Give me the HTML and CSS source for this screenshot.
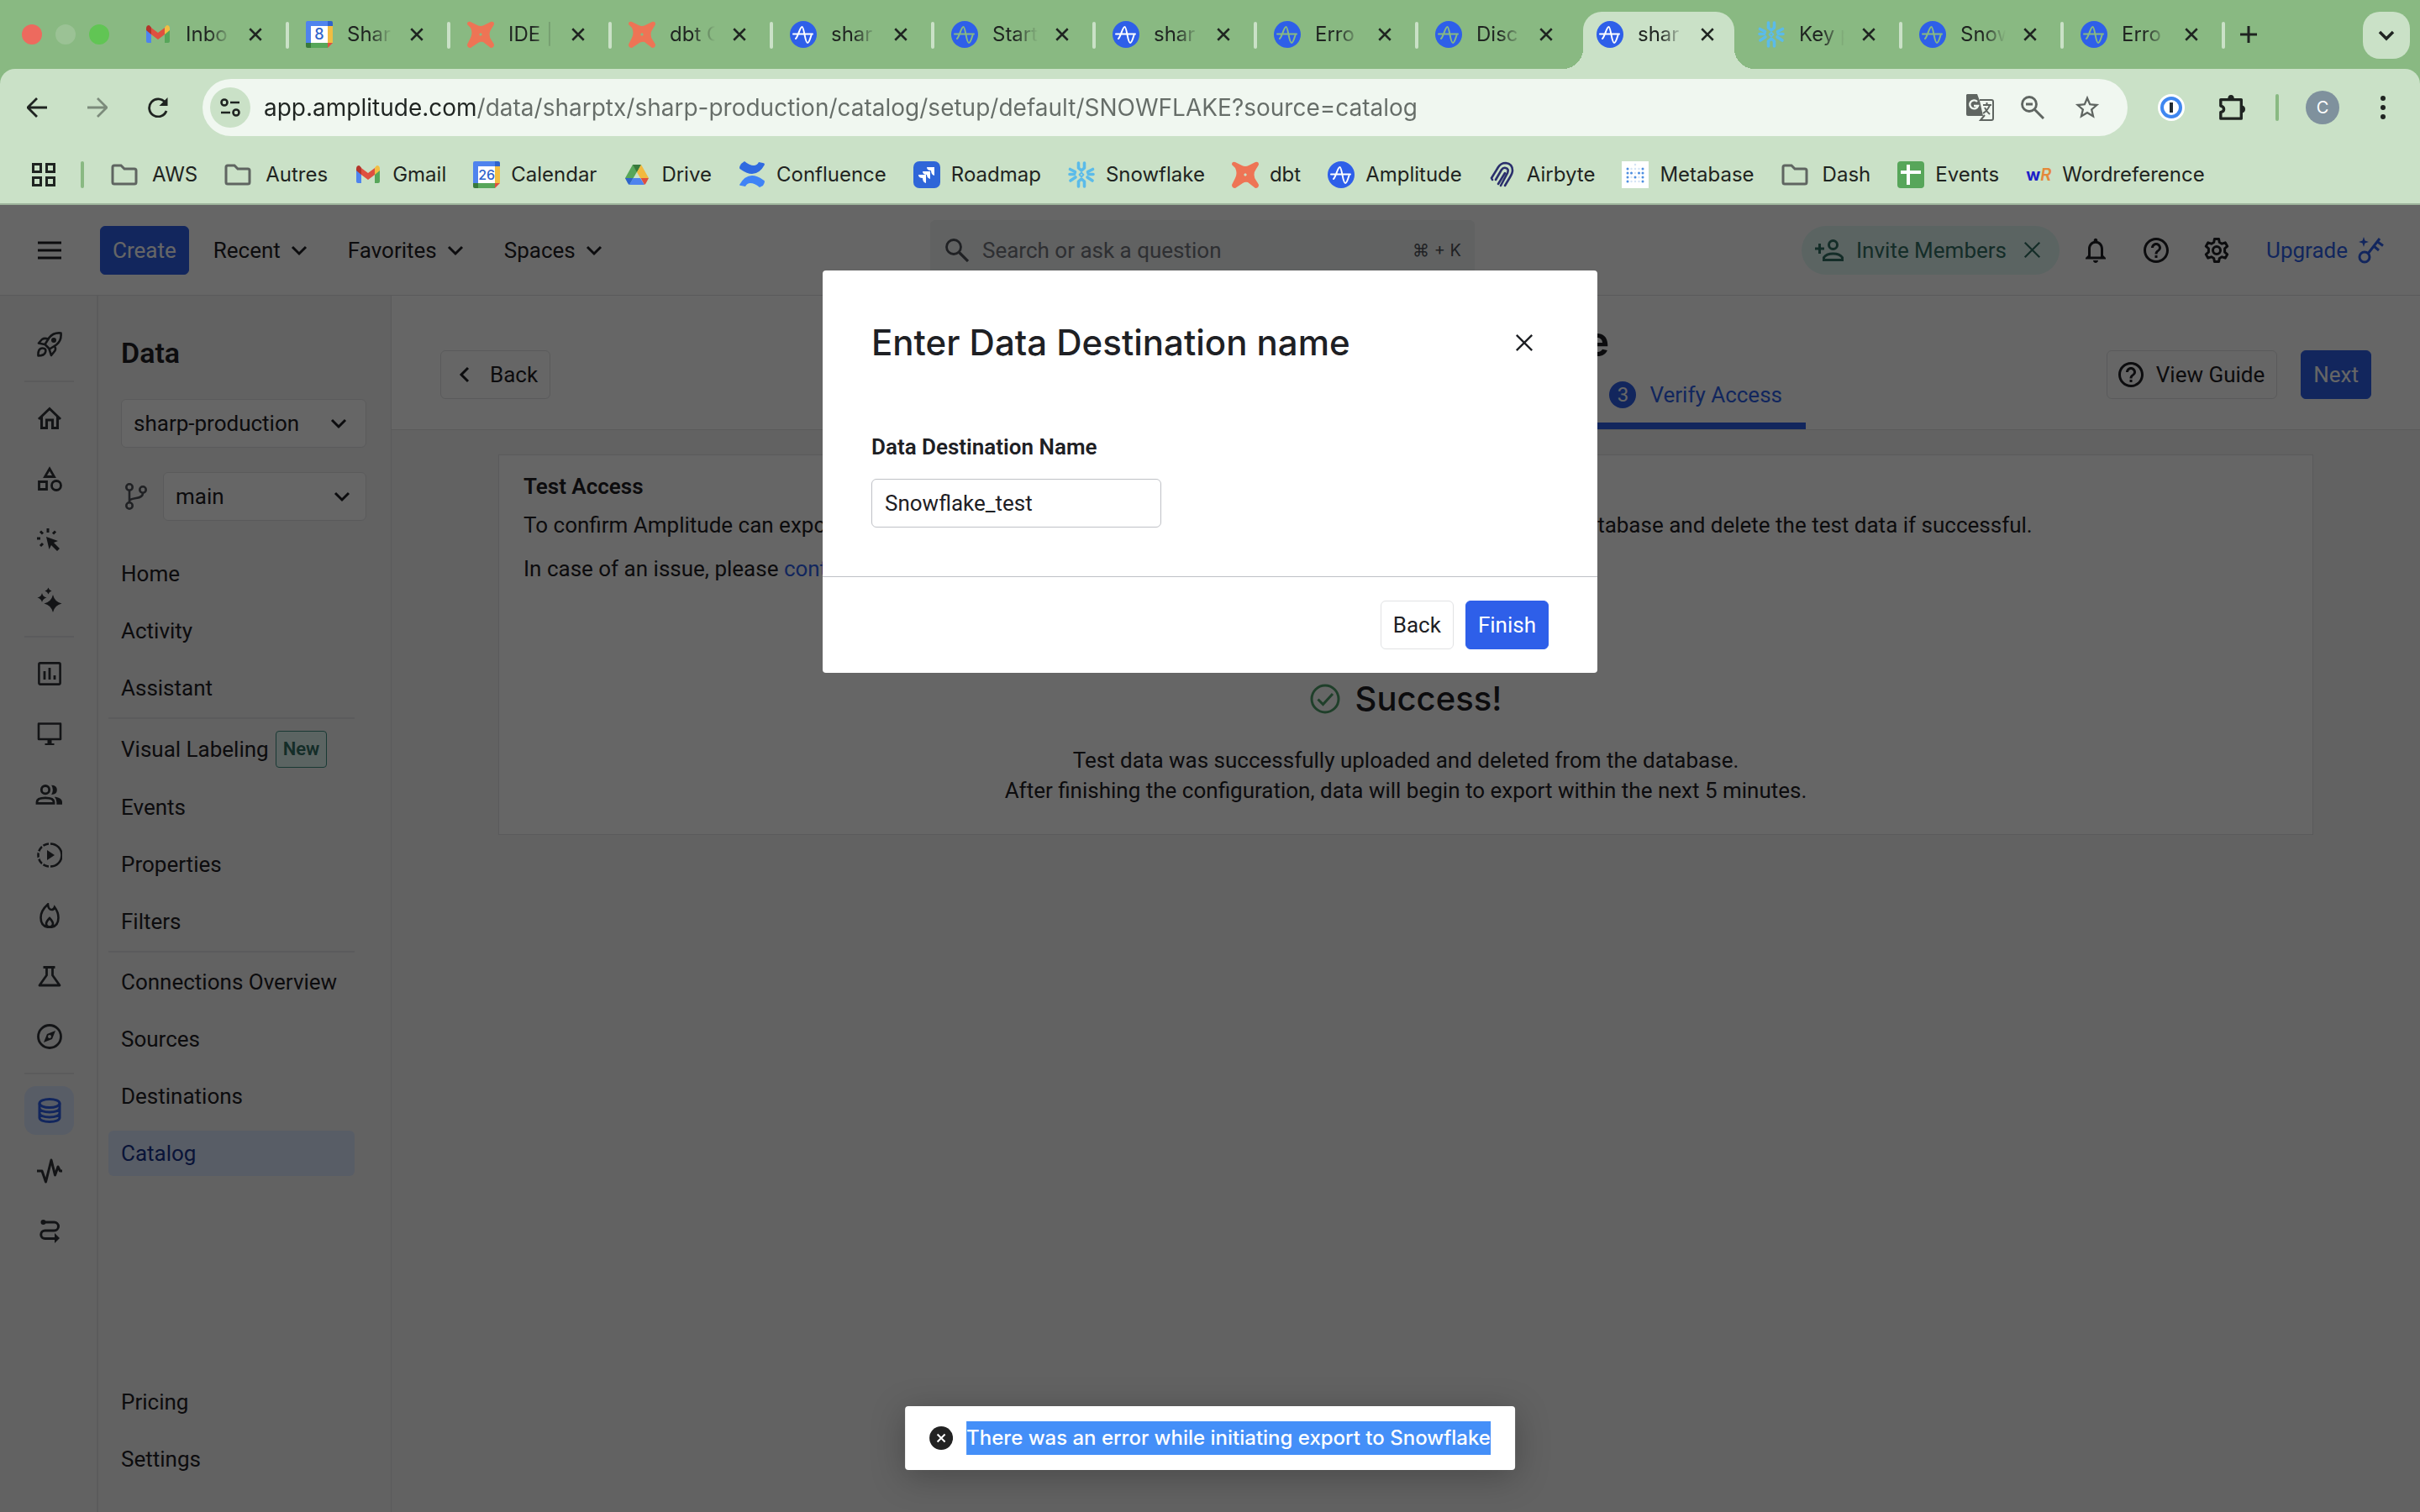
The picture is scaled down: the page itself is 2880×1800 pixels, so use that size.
FILE: index.html
```html
<!DOCTYPE html>
<html lang="en">

<head>
    <meta charset="UTF-8">
    <meta name="viewport" content="width=device-width, initial-scale=1.0">
    <title>Amplitude - Catalog</title>
    <link rel="stylesheet" href="styles.css">
</head>

<body>
    <!-- Shared icons -->
    <svg class="sprite" aria-hidden="true">
        <symbol id="close" viewBox="0 0 24 24"><path d="M3 3l18 18M21 3L3 21" fill="none" stroke="currentColor" stroke-width="3.400"/></symbol>
        <symbol id="close-thin" viewBox="0 0 24 24"><path d="M2 2l20 20M22 2L2 22" fill="none" stroke="currentColor" stroke-width="2.600"/></symbol>
        <symbol id="chevron" viewBox="0 0 20 20"><path d="M2 6l8 8 8-8" fill="none" stroke="currentColor" stroke-width="3"/></symbol>
        <symbol id="folder" viewBox="0 0 32 32"><path d="M2 25V7q0-2 2-2h8l4 4h12q2 0 2 2v14q0 2-2 2H4q-2 0-2-2z" fill="none" stroke="#5f6561" stroke-width="3"/></symbol>
        <symbol id="gmail" viewBox="0 0 32 32">
            <path d="M2 9v15q0 2 2 2h4V13z" fill="#4e84ee"/>
            <path d="M30 9v15q0 2-2 2h-4V13z" fill="#57a65a"/>
            <path d="M8 8l8 6 8-6v8l-8 6-8-6z" fill="#df4f40"/>
            <path d="M2 9q0-4 3.500-4L8 7.500V16l-6-5z" fill="#b3352b"/>
            <path d="M30 9q0-4-3.500-4L24 7.500V16l6-5z" fill="#f2bd42"/>
        </symbol>
        <symbol id="calendar" viewBox="0 0 32 32">
            <path d="M0 2q0-2 2-2h24v6H6v20H0z" fill="#4f83ee"/>
            <path d="M26 0h4q2 0 2 2v4h-6z" fill="#2f63cb"/>
            <path d="M26 6h6v20h-6z" fill="#f2bd42"/>
            <path d="M6 26h20v6H6z" fill="#57a65a"/>
            <path d="M0 26h6v6H2q-2 0-2-2z" fill="#38793c"/>
            <path d="M26 26h6l-6 6z" fill="#df4f40"/>
            <path d="M6 6h20v20H6z" fill="#fff"/>
        </symbol>
        <symbol id="drive" viewBox="0 0 32 32">
            <path d="M11 4h10L7 28 2 20z" fill="#57a65a"/>
            <path d="M11 4h10l-5 9z" fill="#38793c"/>
            <path d="M21 4l9 16H20l-4-7z" fill="#f2b93f"/>
            <path d="M2 20h9.500L7 28q-1-.4-2-2z" fill="#2f63cb"/>
            <path d="M11.500 20H20l5 8H7z" fill="#4f83ee"/>
            <path d="M20.500 20H30l-3.500 6.500L25 28z" fill="#df4f40"/>
        </symbol>
        <symbol id="dbt" viewBox="0 0 32 32"><path fill-rule="evenodd" d="M0 4Q0 0 4 1l8 4q4 2 8 0l8-4q4-1 4 3-1 2-3 5-5 7 0 14 2 3 3 5 0 4-4 4l-9-7q-3-1-6 1l-9 6q-4 0-4-4l4-8q3-6 0-12zM16 14l-2 2 2 2 2-2z" fill="#ee7455"/></symbol>
        <symbol id="amplitude" viewBox="0 0 32 32">
            <circle cx="16" cy="16" r="16" fill="#2e5fe9"/>
            <path d="M4 15.500h23M7 21c3-3 5-14 7.500-14s3.500 19 6.500 19c2 0 3-5 4.500-9" fill="none" stroke="var(--line, #fff)" stroke-width="2" stroke-linecap="round"/>
        </symbol>
        <symbol id="snowflake" viewBox="0 0 32 32">
            <g fill="none" stroke="#5bbbe9" stroke-width="3.600" stroke-linecap="round" stroke-linejoin="round">
                <path d="M12.500 2v6l3.500 3 3.500-3V2M12.500 30v-6l3.500-3 3.500 3v6"/>
                <path d="M2.500 9.500l6 3-1 3H2M3 23l6-4M29.500 9.500l-6 3 1 3H30M29 23l-6-4"/>
                <path d="M16 13.500l2.500 2.500-2.500 2.500-2.500-2.500z" stroke-width="1.800"/>
            </g>
        </symbol>
        <symbol id="confluence" viewBox="0 0 32 32">
            <path d="M3 3q-2 3-2 5 0 1 2 2 7 5 13 5 9 0 15-11 0-2-2-2l-5-1q-2 4-6 4-5 0-11-5z" fill="#2f6ae0"/>
            <path d="M29 29q2-3 2-5 0-1-2-2-7-5-13-5-9 0-15 11 0 1 2 1l5 1q2-4 6-4 5 0 11 5z" fill="#3f83f6"/>
        </symbol>
        <symbol id="roadmap" viewBox="0 0 32 32">
            <rect width="32" height="32" rx="7" fill="#2f66d8"/>
            <path d="M16 7h9v10q-4-1-4-6-5 0-5-4zM11 12h9v9q-4-1-4-5-5 0-5-4zM6 16h9v10q-4-1-4-6-5 0-5-4z" fill="#fff"/>
        </symbol>
        <symbol id="airbyte" viewBox="0 0 32 32"><path d="M3 20L11 7q3-5 9-5 8 1 8 9 0 3-3 8l-6 10M8 22l7-12q2-3 5-2 4 1 2 6L14 29M11 27l8-13M3 20l1 2" fill="none" stroke="#2a2f6c" stroke-width="2.600" stroke-linecap="round"/></symbol>
        <symbol id="metabase" viewBox="0 0 32 32">
            <path d="M0 0h32v32H0z" fill="#fff"/>
            <path d="M11.500 9v16M20.500 9v16M16 4v25" stroke="#d5e4f6" stroke-width="2.500" stroke-linecap="round" stroke-dasharray="0 5" fill="none"/>
            <path d="M7 9v16M25 9v16M11.500 14v1M20.500 14v1M16 19v1" stroke="#4f8fe0" stroke-width="3" stroke-linecap="round" stroke-dasharray="0 5" fill="none"/>
        </symbol>
        <symbol id="sheets" viewBox="0 0 32 32"><rect width="32" height="32" rx="4" fill="#57a65a"/><path d="M4 11h24v4H15v13h-4V15H4zM11 4h4v8h-4z" fill="#fff"/></symbol>
        <symbol id="help" viewBox="0 0 24 24"><path fill="currentColor" d="M11 18h2v-2h-2v2zm1-16C6.480 2 2 6.480 2 12s4.480 10 10 10 10-4.480 10-10S17.520 2 12 2zm0 18c-4.410 0-8-3.590-8-8s3.590-8 8-8 8 3.590 8 8-3.590 8-8 8zm0-14c-2.210 0-4 1.790-4 4h2c0-1.100.9-2 2-2s2 .9 2 2c0 2-3 1.750-3 5h2c0-2.250 3-2.500 3-5 0-2.210-1.790-4-4-4z"/></symbol>
    </svg>

    <!-- Browser -->
    <header class="browser">
        <div class="tab-strip">
            <div class="window-buttons">
                <span class="dot dot-red"></span>
                <span class="dot dot-pale"></span>
                <span class="dot dot-green"></span>
            </div>
            <div class="tab"><svg class="favicon"><use href="#gmail"/></svg><span>Inbo</span><button aria-label="Close tab"><svg><use href="#close"/></svg></button></div>
            <div class="tab"><div class="cal-icon"><svg class="favicon"><use href="#calendar"/></svg><b>8</b></div><span>Shar</span><button aria-label="Close tab"><svg><use href="#close"/></svg></button></div>
            <div class="tab"><svg class="favicon"><use href="#dbt"/></svg><span>IDE |</span><button aria-label="Close tab"><svg><use href="#close"/></svg></button></div>
            <div class="tab"><svg class="favicon"><use href="#dbt"/></svg><span>dbt C</span><button aria-label="Close tab"><svg><use href="#close"/></svg></button></div>
            <div class="tab"><svg class="favicon"><use href="#amplitude"/></svg><span>shar</span><button aria-label="Close tab"><svg><use href="#close"/></svg></button></div>
            <div class="tab asleep"><svg class="favicon"><use href="#amplitude"/></svg><span>Start</span><button aria-label="Close tab"><svg><use href="#close"/></svg></button></div>
            <div class="tab"><svg class="favicon"><use href="#amplitude"/></svg><span>shar</span><button aria-label="Close tab"><svg><use href="#close"/></svg></button></div>
            <div class="tab asleep"><svg class="favicon"><use href="#amplitude"/></svg><span>Erro</span><button aria-label="Close tab"><svg><use href="#close"/></svg></button></div>
            <div class="tab asleep no-line"><svg class="favicon"><use href="#amplitude"/></svg><span>Disc</span><button aria-label="Close tab"><svg><use href="#close"/></svg></button></div>
            <div class="tab tab-current"><svg class="favicon"><use href="#amplitude"/></svg><span>shar</span><button aria-label="Close tab"><svg><use href="#close"/></svg></button></div>
            <div class="tab"><svg class="favicon"><use href="#snowflake"/></svg><span>Key p</span><button aria-label="Close tab"><svg><use href="#close"/></svg></button></div>
            <div class="tab asleep"><svg class="favicon"><use href="#amplitude"/></svg><span>Snow</span><button aria-label="Close tab"><svg><use href="#close"/></svg></button></div>
            <div class="tab asleep"><svg class="favicon"><use href="#amplitude"/></svg><span>Erro</span><button aria-label="Close tab"><svg><use href="#close"/></svg></button></div>
            <button class="new-tab" aria-label="New tab"><svg viewBox="0 0 20 20"><path d="M10 0v20M0 10h20" stroke="currentColor" stroke-width="3"/></svg></button>
            <button class="tab-search" aria-label="Search tabs"><svg viewBox="0 0 20 20"><path d="M2 6l8 8 8-8" fill="none" stroke="currentColor" stroke-width="3.500"/></svg></button>
        </div>

        <div class="toolbar">
            <button aria-label="Back"><svg viewBox="0 0 24 24"><path d="M12 1L1 12l11 11M1.500 12H24" fill="none" stroke="currentColor" stroke-width="2.800"/></svg></button>
            <button aria-label="Forward" class="disabled"><svg viewBox="0 0 24 24"><path d="M12 1l11 11-11 11M22.500 12H0" fill="none" stroke="currentColor" stroke-width="2.800"/></svg></button>
            <button aria-label="Reload"><svg viewBox="0 0 24 24"><path d="M22 16A10.500 10.500 0 1 1 20.500 6" fill="none" stroke="currentColor" stroke-width="2.800"/><path d="M23.500 0v10h-10z" fill="currentColor"/></svg></button>
            <div class="omnibox">
                <button class="site-info" aria-label="Site information"><svg viewBox="0 0 24 24"><g fill="none" stroke="currentColor" stroke-width="2.600"><circle cx="5" cy="6" r="3.500"/><circle cx="19" cy="18" r="3.500"/><path d="M12 6h11M1 18h11"/></g></svg></button>
                <input type="text" class="url" aria-label="Address" value="app.amplitude.com/data/sharptx/sharp-production/catalog/setup/default/SNOWFLAKE?source=catalog">
                <button aria-label="Translate"><svg class="wide" viewBox="0 0 34 34"><path d="M2 1h12l3 8 4 18H3q-2 0-2-2V2z" fill="#5f6561"/><path d="M17 8h14q2 0 2 2v20q0 2-2 2H18l5-6" fill="none" stroke="#5f6561" stroke-width="2"/><path d="M21 14h10M25.500 11v3M29 14q-2 6-8 10M23 17q2 5 6 8" fill="none" stroke="#5f6561" stroke-width="2"/><path d="M14 10a5 5 0 1 0 1 5h-5" fill="none" stroke="#f0f7f0" stroke-width="2.400"/></svg></button>
                <button aria-label="Zoom"><svg viewBox="0 0 28 28"><circle cx="10" cy="10" r="8.500" fill="none" stroke="#5f6561" stroke-width="2.800"/><path d="M6 10h8M16.500 16.500L27 27" stroke="#5f6561" stroke-width="3"/></svg></button>
                <button aria-label="Bookmark"><svg class="wide" viewBox="0 0 24 24"><path d="M22 9.240l-7.190-.62L12 2 9.190 8.630 2 9.240l5.460 4.730L5.820 21 12 17.270 18.180 21l-1.630-7.030L22 9.240zM12 15.400l-3.760 2.270 1-4.280-3.320-2.880 4.380-.38L12 6.100l1.710 4.040 4.380.38-3.320 2.880 1 4.280L12 15.400z" fill="#5f6561"/></svg></button>
            </div>
            <div class="extensions">
                <button aria-label="1Password"><svg viewBox="0 0 32 32"><circle cx="16" cy="16" r="16" fill="#fff"/><circle cx="16" cy="16" r="11" fill="none" stroke="#3f87f0" stroke-width="4"/><path d="M14 10h4v12h-4z" fill="#222b33"/></svg></button>
                <button class="puzzle" aria-label="Extensions"><svg viewBox="0 0 34 34"><path d="M3 7h26v24H3v-8q4-1 4-4t-4-4z" fill="none" stroke="currentColor" stroke-width="3.600" stroke-linejoin="round"/><path d="M12 6q0-5 4-5t4 5zM30 14q4 1 4 5t-4 5z" fill="currentColor"/></svg></button>
                <span class="bar"></span>
                <button class="avatar" aria-label="Profile">C</button>
                <button aria-label="Menu"><svg viewBox="0 0 32 32"><g fill="currentColor"><circle cx="16" cy="5" r="3"/><circle cx="16" cy="16" r="3"/><circle cx="16" cy="27" r="3"/></g></svg></button>
            </div>
        </div>

        <nav class="bookmarks">
            <button class="apps" aria-label="Apps"><svg viewBox="0 0 28 28"><path d="M1.500 1.500h9v9h-9zM17.500 1.500h9v9h-9zM1.500 17.500h9v9h-9zM17.500 17.500h9v9h-9z" fill="none" stroke="currentColor" stroke-width="3"/></svg></button>
            <span class="bar"></span>
            <a href="#" class="folder"><svg><use href="#folder"/></svg>AWS</a>
            <a href="#" class="folder"><svg><use href="#folder"/></svg>Autres</a>
            <a href="#"><svg><use href="#gmail"/></svg>Gmail</a>
            <a href="#"><span class="cal-icon"><svg><use href="#calendar"/></svg><b>26</b></span>Calendar</a>
            <a href="#"><svg><use href="#drive"/></svg>Drive</a>
            <a href="#"><svg><use href="#confluence"/></svg>Confluence</a>
            <a href="#"><svg><use href="#roadmap"/></svg>Roadmap</a>
            <a href="#"><svg><use href="#snowflake"/></svg>Snowflake</a>
            <a href="#"><svg><use href="#dbt"/></svg>dbt</a>
            <a href="#"><svg><use href="#amplitude"/></svg>Amplitude</a>
            <a href="#"><svg><use href="#airbyte"/></svg>Airbyte</a>
            <a href="#"><svg><use href="#metabase"/></svg>Metabase</a>
            <a href="#" class="folder"><svg><use href="#folder"/></svg>Dash</a>
            <a href="#"><svg><use href="#sheets"/></svg>Events</a>
            <a href="#"><span class="wr-icon"><b>w</b><i>R</i></span>Wordreference</a>
        </nav>
    </header>

    <!-- Amplitude -->
    <div class="app">
        <header class="app-header">
            <div class="header-left">
                <button class="hamburger" aria-label="Menu"><svg viewBox="0 0 28 22"><path d="M0 2h28M0 11h28M0 20h28" stroke="currentColor" stroke-width="3"/></svg></button>
                <button class="btn btn-primary">Create</button>
                <button class="menu-btn">Recent <svg><use href="#chevron"/></svg></button>
                <button class="menu-btn">Favorites <svg><use href="#chevron"/></svg></button>
                <button class="menu-btn">Spaces <svg><use href="#chevron"/></svg></button>
            </div>
            <div class="search">
                <svg viewBox="0 0 28 28"><circle cx="10" cy="10" r="8.500" fill="none" stroke="currentColor" stroke-width="2.800"/><path d="M16.500 16.500L27 27" stroke="currentColor" stroke-width="3.200"/></svg>
                <input type="text" placeholder="Search or ask a question" aria-label="Search">
                <kbd>⌘ + K</kbd>
            </div>
            <div class="header-right">
                <div class="invite">
                    <svg class="invite-icon" viewBox="0 0 34 26"><g fill="none" stroke="currentColor" stroke-width="3"><path d="M0 11h11M5.500 5v12"/><circle cx="21.500" cy="6.500" r="5"/><path d="M10.500 24.500v-3q3-4.500 11-4.500t11 4.500v3z"/></g></svg>
                    <button class="invite-btn">Invite Members</button>
                    <button class="invite-close" aria-label="Dismiss"><svg><use href="#close-thin"/></svg></button>
                </div>
                <button class="icon-btn" aria-label="Notifications"><svg viewBox="0 0 24 24"><path fill="currentColor" d="M12 22c1.100 0 2-.9 2-2h-4c0 1.100.89 2 2 2zm6-6v-5c0-3.070-1.640-5.640-4.500-6.320V4c0-.83-.67-1.500-1.500-1.500s-1.500.67-1.500 1.500v.68C7.630 5.360 6 7.920 6 11v5l-2 2v1h16v-1l-2-2zm-2 1H8v-6c0-2.480 1.510-4.500 4-4.500s4 2.020 4 4.500v6z"/></svg></button>
                <button class="icon-btn" aria-label="Help"><svg><use href="#help"/></svg></button>
                <button class="icon-btn" aria-label="Settings"><svg viewBox="0 0 24 24"><path fill="none" stroke="currentColor" stroke-width="2" stroke-linejoin="round" d="M10.300 3h3.400l.5 2.700 2 1.100 2.600-.9 1.700 2.900-2.100 1.800v2.800l2.100 1.800-1.700 2.900-2.600-.9-2 1.100-.5 2.700h-3.400l-.5-2.700-2-1.100-2.600.9-1.700-2.900 2.100-1.800v-2.800L3.500 8.800l1.700-2.900 2.600.9 2-1.100z"/><circle cx="12" cy="12" r="3" fill="none" stroke="currentColor" stroke-width="2"/></svg></button>
                <a href="#" class="upgrade">Upgrade <svg viewBox="0 0 32 32"><g fill="none" stroke="currentColor" stroke-width="3"><circle cx="8" cy="24" r="6"/><path d="M12 20L26 2M19 11l6 5M23 5.500l7 5"/></g><path d="M7 0l1.500 4.500L13 6 8.500 7.500 7 12 5.500 7.500 1 6l4.500-1.500z" fill="currentColor"/></svg></a>
            </div>
        </header>

        <div class="app-body">
            <nav class="rail">
                <a href="#" aria-label="Get started"><svg viewBox="0 0 30 30"><g fill="none" stroke="currentColor" stroke-width="2.600" stroke-linejoin="round"><path d="M28.500 1.500q-9-1-14 5.500l-5 8 5.500 5.500 8-5q6.500-5 5.500-14zM13 8.500q-4-1.500-7 .5l-4 4.500 7 1.500M21 17q2 4 0 6l-4 5-2.500-7.500M1.500 28.500q-.5-9 5-9 5 0 3.500 5-1.500 4-8.500 4z"/></g><circle cx="20" cy="10" r="3" fill="currentColor"/></svg></a>
                <hr>
                <a href="#" aria-label="Home"><svg viewBox="0 0 30 30"><path d="M2 16L15 3.500 28 16M5.500 13v13.500h6V17h7v9.500h6V13" fill="none" stroke="currentColor" stroke-width="3"/></svg></a>
                <a href="#" aria-label="Shapes"><svg viewBox="0 0 30 30"><g fill="none" stroke="currentColor" stroke-width="2.800"><path d="M15 3l5.500 9.500h-11zM2.500 18.500h9v9h-9z"/><circle cx="23" cy="23" r="5.500"/></g></svg></a>
                <a href="#" aria-label="Autocapture"><svg viewBox="0 0 30 30"><path d="M11 12l14 5-5 2 7 7-3 3-7-7-2.500 5z" fill="currentColor"/><path d="M13 2v5M0 14h4M4 5.500l3 3M22 5.500l-3 3M4 23l3-3" stroke="currentColor" stroke-width="3"/></svg></a>
                <a href="#" aria-label="AI"><svg viewBox="0 0 30 30"><path d="M19 9q2 8.500 10.500 10.500Q21 21.500 19 30q-2-8.500-10.500-10.500Q17 17.500 19 9zM6 7q1 4.500 5.500 5.500Q7 13.500 6 18q-1-4.500-5.500-5.500Q5 11.500 6 7zM13.500.5q.8 3.200 4 4-3.200.8-4 4-.8-3.200-4-4 3.200-.8 4-4z" fill="currentColor"/></svg></a>
                <hr>
                <a href="#" aria-label="Analytics"><svg viewBox="0 0 30 30"><rect x="2.400" y="2.400" width="25.200" height="25.200" rx="1.500" fill="none" stroke="currentColor" stroke-width="2.600"/><path d="M9 12v10M15 8v14M21 17v5" stroke="currentColor" stroke-width="2.800"/></svg></a>
                <a href="#" aria-label="Sessions"><svg viewBox="0 0 30 30"><path d="M2 2.500h26v18.500H2z" fill="none" stroke="currentColor" stroke-width="2.600" stroke-linejoin="round"/><path d="M12.500 22h5v4h3v2h-11v-2h3z" fill="currentColor"/></svg></a>
                <a href="#" aria-label="Audiences"><svg class="large" viewBox="0 0 24 24"><path fill="none" stroke="currentColor" stroke-width="1.700" d="M3 18.200v-1q0-2.900 6-2.900t6 2.900v1z"/><circle cx="9" cy="8.500" r="2.800" fill="none" stroke="currentColor" stroke-width="1.700"/><path fill="currentColor" d="M16.500 13.600q4.500 1 4.500 3.600V19h-4v-1.800q0-2.200-1.500-3.600zM13.300 5.200q4 0 4 3.400t-4 3.400q1-1.400 1-3.400t-1-3.400z"/></svg></a>
                <a href="#" aria-label="Replay"><svg viewBox="0 0 30 30"><path d="M16 1.500a13.500 13.500 0 0 1 0 27M14 1.500a13.500 13.500 0 0 0-12.500 13.500A13.500 13.500 0 0 0 14 28.500" fill="none" stroke="currentColor" stroke-width="2.600"/><path d="M5.500 2.500l3 4.500M0 10.500l3.500 1.500M0 19.500l3.500-1.500M5.500 27.500l3-4.500" stroke="#f5f5f5" stroke-width="2"/><path d="M12 9l9 6-9 6z" fill="currentColor"/></svg></a>
                <a href="#" aria-label="Heatmaps"><svg viewBox="0 0 30 30"><path d="M13 1.500q.5 6.500 4.500 6.500 2.500 0 3.500-3 4.500 6 4.500 12.500 0 11-10.500 11.500Q4.500 28.500 4.500 17.500 4.500 9 13 1.500zM15 18q-4 4-4 7t4 3.500q4-.5 4-3.500t-4-7z" fill="none" stroke="currentColor" stroke-width="2.600"/></svg></a>
                <a href="#" aria-label="Experiment"><svg viewBox="0 0 30 30"><path d="M7.500 4.500h14M11.500 4v10L3 26h24l-8.500-12V4" fill="none" stroke="currentColor" stroke-width="2.800" stroke-linejoin="round"/></svg></a>
                <a href="#" aria-label="Explore"><svg viewBox="0 0 30 30"><circle cx="15" cy="15" r="13.500" fill="none" stroke="currentColor" stroke-width="2.800"/><path fill-rule="evenodd" d="M22 8l-4 10-10 4 4-10zM15 13a2 2 0 1 0 0 4 2 2 0 0 0 0-4z" fill="currentColor"/></svg></a>
                <hr>
                <a href="#" class="current" aria-label="Data"><svg viewBox="0 0 30 30"><g fill="none" stroke="currentColor" stroke-width="3"><ellipse cx="15" cy="6.500" rx="12" ry="5"/><path d="M3 6.500v17c0 3 5 5 12 5s12-2 12-5v-17M3 12c0 3 5 5 12 5s12-2 12-5M3 18c0 3 5 5 12 5s12-2 12-5"/></g></svg></a>
                <a href="#" aria-label="Health"><svg viewBox="0 0 30 30"><path d="M0 15h6l4.500 13L17 2l4.500 18 3.500-10 2.500 5H30" fill="none" stroke="currentColor" stroke-width="3" stroke-linejoin="round"/></svg></a>
                <a href="#" aria-label="Pipelines"><svg viewBox="0 0 30 30"><path d="M8 4h12.500a4.500 4.500 0 0 1 0 10h-11a4.500 4.500 0 0 0 0 9.500H22" fill="none" stroke="currentColor" stroke-width="3"/><circle cx="7.500" cy="4" r="3" fill="currentColor"/><path d="M21 17l6 6-6 6z" fill="currentColor"/></svg></a>
            </nav>

            <aside class="sidebar">
                <h2>Data</h2>
                <div class="select-box">
                    <select aria-label="Project"><option>sharp-production</option></select>
                    <svg><use href="#chevron"/></svg>
                </div>
                <div class="branch">
                    <svg class="branch-icon" viewBox="0 0 26 32"><g fill="none" stroke="currentColor" stroke-width="2.600"><circle cx="5" cy="5" r="3.700"/><circle cx="5" cy="27" r="3.700"/><circle cx="21" cy="8" r="3.700"/><path d="M5 9v14M5 21q1-2 8-3 8-1 8-6"/></g></svg>
                    <div class="select-box">
                        <select aria-label="Branch"><option>main</option></select>
                        <svg><use href="#chevron"/></svg>
                    </div>
                </div>
                <nav class="side-nav">
                    <a href="#">Home</a>
                    <a href="#">Activity</a>
                    <a href="#">Assistant</a>
                    <hr>
                    <a href="#" class="with-badge">Visual Labeling <span class="badge">New</span></a>
                    <a href="#">Events</a>
                    <a href="#">Properties</a>
                    <a href="#">Filters</a>
                    <hr>
                    <a href="#">Connections Overview</a>
                    <a href="#">Sources</a>
                    <a href="#">Destinations</a>
                    <a href="#" class="current">Catalog</a>
                    <a href="#" class="push-down">Pricing</a>
                    <a href="#">Settings</a>
                </nav>
            </aside>

            <main class="content">
                <div class="setup-header">
                    <div class="setup-left">
                        <button class="btn btn-back"><svg viewBox="0 0 20 20"><path d="M14 2l-8 8 8 8" fill="none" stroke="currentColor" stroke-width="3"/></svg> Back</button>
                    </div>
                    <div class="setup-center">
                        <h1>Export to Snowflake</h1>
                        <div class="steps">
                            <a href="#" class="step"><span>1</span> Getting Started</a>
                            <a href="#" class="step"><span>2</span> Set Up Export</a>
                            <a href="#" class="step step-current"><span>3</span> Verify Access</a>
                        </div>
                    </div>
                    <div class="setup-right">
                        <button class="btn btn-guide"><svg><use href="#help"/></svg> View Guide</button>
                        <button class="btn btn-primary">Next</button>
                    </div>
                </div>
                <section class="card">
                    <h3>Test Access</h3>
                    <p>To confirm Amplitude can export data to your Snowflake warehouse, we will upload sample test data to your database and delete the test data if successful.</p>
                    <p>In case of an issue, please <a href="#">contact us</a></p>
                    <div class="success">
                        <h2><svg viewBox="0 0 36 36"><circle cx="18" cy="18" r="16" fill="none" stroke="currentColor" stroke-width="3"/><path d="M9.500 18.500l6 6L27 12" fill="none" stroke="currentColor" stroke-width="3"/></svg> Success!</h2>
                        <p>Test data was successfully uploaded and deleted from the database.</p>
                        <p>After finishing the configuration, data will begin to export within the next 5 minutes.</p>
                    </div>
                </section>
            </main>
        </div>

        <div class="overlay">
            <div class="modal" role="dialog" aria-labelledby="modal-title">
                <div class="modal-header">
                    <h2 id="modal-title">Enter Data Destination name</h2>
                    <button aria-label="Close"><svg><use href="#close-thin"/></svg></button>
                </div>
                <div class="modal-body">
                    <label for="destination-name">Data Destination Name</label>
                    <input type="text" id="destination-name" value="Snowflake_test">
                </div>
                <div class="modal-footer">
                    <button class="btn">Back</button>
                    <button class="btn btn-primary">Finish</button>
                </div>
            </div>
        </div>

        <div class="toast" role="alert">
            <svg viewBox="0 0 28 28"><circle cx="14" cy="14" r="14" fill="#222"/><path d="M9.500 9.500l9 9M18.500 9.500l-9 9" stroke="#fff" stroke-width="2"/></svg>
            <span>There was an error while initiating export to Snowflake</span>
        </div>
    </div>
</body>

</html>
```

FILE: styles.css
```css
* {
    box-sizing: border-box;
}

body {
    margin: 0;
    height: 100vh;
    display: flex;
    flex-direction: column;
    overflow: hidden;
    font-family: Roboto, sans-serif;
    font-size: 26px;
    line-height: 36px;
    color: #1e2024;
    background-color: #fff;
}

button,
input,
select {
    font: inherit;
    color: inherit;
    background: none;
    border: none;
    margin: 0;
    padding: 0;
    outline: none;
}

button,
a {
    cursor: pointer;
}

a {
    color: inherit;
    text-decoration: none;
}

h1,
h2,
h3,
p {
    margin: 0;
}

svg {
    display: block;
    flex: none;
}

hr {
    border: none;
    background-color: #e3e4e6;
    height: 2px;
}

.sprite {
    display: none;
}

/* Browser */

.browser {
    font-family: Inter, sans-serif;
    font-size: 24px;
    color: #1f2421;
    background-color: #89b982;
    border-bottom: 2px solid #9db39b;
}

.tab-strip {
    display: flex;
    height: 82px;
    padding-right: 12px;
}

.window-buttons {
    display: flex;
    align-items: center;
    gap: 16px;
    width: 150px;
    padding-left: 26px;
}

.dot {
    width: 24px;
    height: 24px;
    border-radius: 50%;
}

.dot-red {
    background-color: #ed6a5e;
}

.dot-pale {
    background-color: #9bc295;
}

.dot-green {
    background-color: #61c554;
}

.tab {
    position: relative;
    display: flex;
    align-items: center;
    gap: 17px;
    flex: 0 1 192px;
    min-width: 0;
    padding: 0 26px 0 22px;
}

.tab > span {
    flex: 1;
    overflow: hidden;
    white-space: nowrap;
    -webkit-mask-image: linear-gradient(90deg, #000 50%, transparent);
    mask-image: linear-gradient(90deg, #000 50%, transparent);
}

.tab button svg {
    width: 24px;
    height: 18px;
}

/* separator between tabs */
.tab::after {
    content: "";
    position: absolute;
    right: -2px;
    top: 26px;
    width: 4px;
    height: 32px;
    border-radius: 2px;
    background-color: #cae1c7;
}

.favicon {
    width: 32px;
    height: 32px;
}

.asleep .favicon {
    --line: #89b982;
}

.no-line::after {
    display: none;
}

.tab-current {
    z-index: 1;
}

.tab-current::before {
    content: "";
    position: absolute;
    z-index: -1;
    inset: 14px 6px 0;
    border-radius: 22px 22px 0 0;
    background-color: #cae1c7;
}

/* curved feet of the current tab */
.tab-current::after {
    z-index: -1;
    left: -18px;
    right: -18px;
    top: auto;
    bottom: 0;
    width: auto;
    height: 24px;
    border-radius: 0;
    background: radial-gradient(circle at 0 0, transparent 24px, #cae1c7 24px) left / 24px 24px no-repeat,
        radial-gradient(circle at 100% 0, transparent 24px, #cae1c7 24px) right / 24px 24px no-repeat;
}

.cal-icon {
    display: grid;
    place-items: center;
}

.cal-icon > * {
    grid-area: 1 / 1;
}

.cal-icon b {
    font-size: 16px;
    line-height: 16px;
    font-weight: 500;
    color: #2f63cb;
}

.tab .cal-icon b {
    font-size: 18px;
}

.new-tab {
    margin-left: 20px;
    width: 20px;
}

.tab-search {
    width: 56px;
    height: 56px;
    margin: 14px 0 0 auto;
    padding: 18px;
    border-radius: 20px;
    background-color: #cae1c7;
}

.toolbar {
    display: flex;
    align-items: center;
    height: 92px;
    padding: 0 28px;
    border-radius: 18px 18px 0 0;
    background-color: #cae1c7;
}

.toolbar > button {
    padding: 4px;
    margin-right: 40px;
}

.toolbar > button svg {
    width: 24px;
    height: 24px;
}

.disabled {
    opacity: 0.45;
}

.omnibox {
    display: flex;
    align-items: center;
    flex: 1;
    height: 68px;
    margin-left: -3px;
    padding: 0 33px 0 9px;
    border-radius: 34px;
    background-color: #f0f7f0;
}

.site-info {
    width: 48px;
    height: 48px;
    padding: 12px;
    border-radius: 50%;
    background-color: #cae1c7;
}

.url {
    flex: 1;
    font-size: 28px;
    margin-left: 16px;
    /* host dark, path grey */
    color: transparent;
    background: linear-gradient(90deg, #1f2421 253px, #666d68 253px);
    -webkit-background-clip: text;
    background-clip: text;
}

.omnibox button:not(.site-info) {
    width: 32px;
    margin-left: 32px;
    display: grid;
    place-items: center;
}

.omnibox button svg {
    width: 28px;
    height: 28px;
}

.omnibox .site-info svg {
    width: 24px;
    height: 24px;
}

.omnibox .wide {
    width: 34px;
    height: 34px;
}

.extensions {
    display: flex;
    align-items: center;
    margin-left: 36px;
}

.extensions button {
    margin-right: 40px;
}

.extensions svg {
    width: 32px;
    height: 32px;
}

.extensions .puzzle {
    margin-right: 36px;
}

.extensions button:last-child {
    margin: 0;
}

.bar {
    width: 4px;
    height: 32px;
    border-radius: 2px;
    background-color: #89b982;
}

.extensions .avatar {
    width: 40px;
    height: 40px;
    margin: 0 36px 0 32px;
    border-radius: 50%;
    font-size: 20px;
    color: #fff;
    background-color: #7f919d;
}

.bookmarks {
    display: flex;
    align-items: center;
    gap: 32px;
    height: 68px;
    padding: 0 38px;
    background-color: #cae1c7;
}

.bookmarks .bar {
    margin: 0 0 0 -2px;
}

.bookmarks a {
    display: flex;
    align-items: center;
    gap: 13px;
}

.bookmarks .folder {
    gap: 17px;
}

.bookmarks svg {
    width: 32px;
    height: 32px;
}

.bookmarks .apps svg {
    width: 28px;
    height: 28px;
}

.wr-icon {
    font-size: 20px;
    color: #1c20c8;
}

.wr-icon i {
    color: #e5893a;
    font-weight: 600;
}

/* App header */

.app {
    position: relative;
    display: flex;
    flex-direction: column;
    flex: 1;
    min-height: 0;
}

.app-header {
    display: grid;
    grid-template-columns: 1fr 648px 1fr;
    align-items: center;
    height: 108px;
    padding: 0 42px 0 24px;
    border-bottom: 1px solid #e1e2e4;
}

.header-left,
.header-right {
    display: flex;
    align-items: center;
}

.header-right {
    justify-content: flex-end;
}

.hamburger {
    margin: 0 46px 0 21px;
}

.hamburger svg {
    width: 28px;
    height: 22px;
}

.btn {
    display: flex;
    align-items: center;
    justify-content: center;
    height: 58px;
    padding: 0 14px;
    border: 1px solid #e1e2e4;
    border-radius: 6px;
    background-color: #fff;
}

.btn-primary {
    border-color: #2e5fe9;
    background-color: #2e5fe9;
    color: #fff;
}

.menu-btn {
    display: flex;
    align-items: center;
    gap: 12px;
    margin-left: 29px;
}

.menu-btn + .menu-btn {
    margin-left: 48px;
}

.menu-btn svg,
.select-box svg {
    width: 20px;
    height: 20px;
}

.search {
    display: flex;
    align-items: center;
    gap: 16px;
    height: 72px;
    padding: 0 16px 0 18px;
    border-radius: 6px;
    background-color: #f2f4f5;
    color: #50545a;
}

.search svg {
    width: 28px;
    height: 28px;
}

.search input {
    flex: 1;
}

.search input::placeholder {
    color: #73767d;
    opacity: 1;
}

.search kbd {
    font-family: Inter, "DejaVu Sans", sans-serif;
    font-size: 20px;
}

.invite {
    display: flex;
    align-items: center;
    height: 58px;
    margin-right: 25px;
    padding: 0 22px 0 16px;
    border-radius: 29px;
    background-color: #e3f9f6;
    color: #347064;
}

.invite-icon {
    width: 34px;
    height: 26px;
    margin-right: 15px;
}

.invite-close {
    margin-left: 20px;
}

.invite-close svg {
    width: 21px;
    height: 21px;
}

.icon-btn {
    margin-right: 36px;
}

.icon-btn svg {
    width: 36px;
    height: 36px;
}

.upgrade {
    display: flex;
    align-items: center;
    gap: 12px;
    margin-left: 5px;
    color: #2e5fe9;
}

.upgrade svg {
    width: 32px;
    height: 32px;
}

.app-body {
    display: flex;
    flex: 1;
    min-height: 0;
    background-color: #f5f5f5;
}

/* Icon rail */

.rail {
    width: 117px;
    padding: 22px 27px 0 29px;
    border-right: 2px solid #e3e4e6;
    color: #303338;
}

.rail a {
    display: flex;
    align-items: center;
    justify-content: center;
    height: 58px;
    margin: 7px 0;
    width: 59px;
    border-radius: 14px;
}

.rail a + a {
    margin-top: 14px;
}

.rail hr {
    margin: 14px 0;
}

.rail svg {
    width: 30px;
    height: 30px;
}

.rail .large {
    width: 40px;
    height: 40px;
}

.rail .current {
    background-color: #dce8ff;
    color: #2e5fe9;
}

/* Sidebar */

.sidebar {
    display: flex;
    flex-direction: column;
    width: 349px;
    padding: 48px 29px 29px 27px;
    border-right: 1px solid #e1e2e4;
}

.sidebar h2 {
    margin-bottom: 35px;
    font-size: 34px;
    line-height: 40px;
    font-weight: 600;
}

.select-box {
    display: flex;
    align-items: center;
    flex: 1;
    height: 58px;
    padding: 0 18px 0 14px;
    border: 1px solid #e1e2e4;
    border-radius: 6px;
    background-color: #fff;
}

.sidebar > .select-box {
    flex: none;
    padding-right: 22px;
}

.select-box select {
    flex: 1;
    appearance: none;
}

.branch {
    display: flex;
    align-items: center;
    gap: 19px;
    margin: 29px 0;
    padding-left: 5px;
    color: #50545a;
}

.branch .select-box {
    color: #1e2024;
}

.branch-icon {
    width: 26px;
    height: 32px;
}

.side-nav {
    display: flex;
    flex-direction: column;
    flex: 1;
    margin: 0 14px 0 -15px;
}

.side-nav a {
    display: flex;
    align-items: center;
    gap: 8px;
    height: 54px;
    margin: 7px 0;
    padding: 0 15px;
    border-radius: 6px;
}

.side-nav .with-badge {
    height: 56px;
}

.side-nav hr {
    width: 100%;
    margin: 1px 0;
}

.side-nav .current {
    background-color: #dce8ff;
    color: #18348c;
}

.side-nav .push-down {
    margin-top: auto;
}

.badge {
    padding: 0 8px;
    border: 1px solid #3f8f82;
    border-radius: 4px;
    background-color: #e3f9f6;
    color: #347064;
    font-size: 22px;
    line-height: 42px;
    font-weight: 600;
}

/* Setup page */

.content {
    flex: 1;
    min-width: 0;
}

.setup-header {
    display: grid;
    grid-template-columns: 1fr 952px 1fr;
    align-items: end;
    height: 160px;
    padding: 0 58px;
    border-bottom: 1px solid #e1e2e4;
    background-color: #fff;
}

.setup-left,
.setup-right {
    display: flex;
    gap: 28px;
    padding-bottom: 36px;
}

.setup-right {
    justify-content: flex-end;
}

.btn-back {
    gap: 20px;
    padding-left: 18px;
}

.btn-back svg {
    width: 20px;
    height: 20px;
}

.btn-guide {
    gap: 12px;
    padding-left: 10px;
}

.btn-guide svg {
    width: 36px;
    height: 36px;
}

.setup-center h1 {
    margin-bottom: 16px;
    text-align: center;
    font-family: Inter, sans-serif;
    font-size: 50px;
    line-height: 60px;
    font-weight: 600;
}

.steps {
    display: flex;
    justify-content: space-between;
}

.step {
    display: flex;
    align-items: center;
    gap: 16px;
    padding: 0 28px 15px;
    border-bottom: 8px solid transparent;
}

.step span {
    width: 32px;
    height: 32px;
    border-radius: 50%;
    background-color: #73767d;
    color: #fff;
    font-size: 24px;
    line-height: 32px;
    text-align: center;
}

.step-current {
    color: #2e5fe9;
    border-color: #2e5fe9;
}

.step-current span {
    background-color: #2e5fe9;
}

.card {
    margin: 29px 127px;
    padding: 19px 29px 34px;
    border: 1px solid #e1e2e4;
    background-color: #fff;
}

.card h3 {
    margin-bottom: 10px;
    font-size: 26px;
    font-weight: 600;
}

.card > p {
    margin-bottom: 16px;
}

.card > p a {
    color: #2e5fe9;
}

.success {
    margin-top: 113px;
    text-align: center;
}

.success h2 {
    display: flex;
    align-items: center;
    justify-content: center;
    gap: 18px;
    margin-bottom: 31px;
    font-family: Inter, sans-serif;
    font-size: 40px;
    line-height: 48px;
    font-weight: 500;
}

.success svg {
    width: 36px;
    height: 36px;
    color: #4f9f6a;
}

/* Modal */

.overlay {
    position: absolute;
    inset: 0;
    padding-top: 78px;
    background-color: rgba(0, 0, 0, 0.6);
}

.modal {
    width: 922px;
    margin: 0 auto;
    border-radius: 4px;
    background-color: #fff;
}

.modal-header {
    display: flex;
    align-items: center;
    justify-content: space-between;
    padding: 58px 76px 0 58px;
}

.modal-header h2 {
    font-family: Inter, sans-serif;
    font-size: 42px;
    line-height: 56px;
    font-weight: 500;
}

.modal-header svg {
    width: 22px;
    height: 22px;
}

.modal-body {
    padding: 78px 58px 58px;
}

.modal-body label {
    display: block;
    margin-bottom: 20px;
    font-weight: 600;
}

.modal-body input {
    display: block;
    width: 345px;
    height: 58px;
    padding: 0 15px;
    border: 1px solid #bfc1c6;
    border-radius: 6px;
}

.modal-footer {
    display: flex;
    justify-content: flex-end;
    gap: 14px;
    padding: 28px 58px;
    border-top: 1px solid #bfc1c6;
}

/* Toast */

.toast {
    position: absolute;
    left: 50%;
    bottom: 50px;
    transform: translateX(-50%);
    display: flex;
    align-items: center;
    gap: 16px;
    padding: 18px 29px;
    border-radius: 4px;
    background-color: #fff;
    box-shadow: 0 8px 40px rgba(0, 0, 0, 0.25);
    font-family: Inter, sans-serif;
    font-size: 24px;
    line-height: 40px;
    font-weight: 500;
    white-space: nowrap;
}

.toast svg {
    width: 28px;
    height: 28px;
}

.toast span {
    background-color: #448ff8;
    color: #fff;
}
```
